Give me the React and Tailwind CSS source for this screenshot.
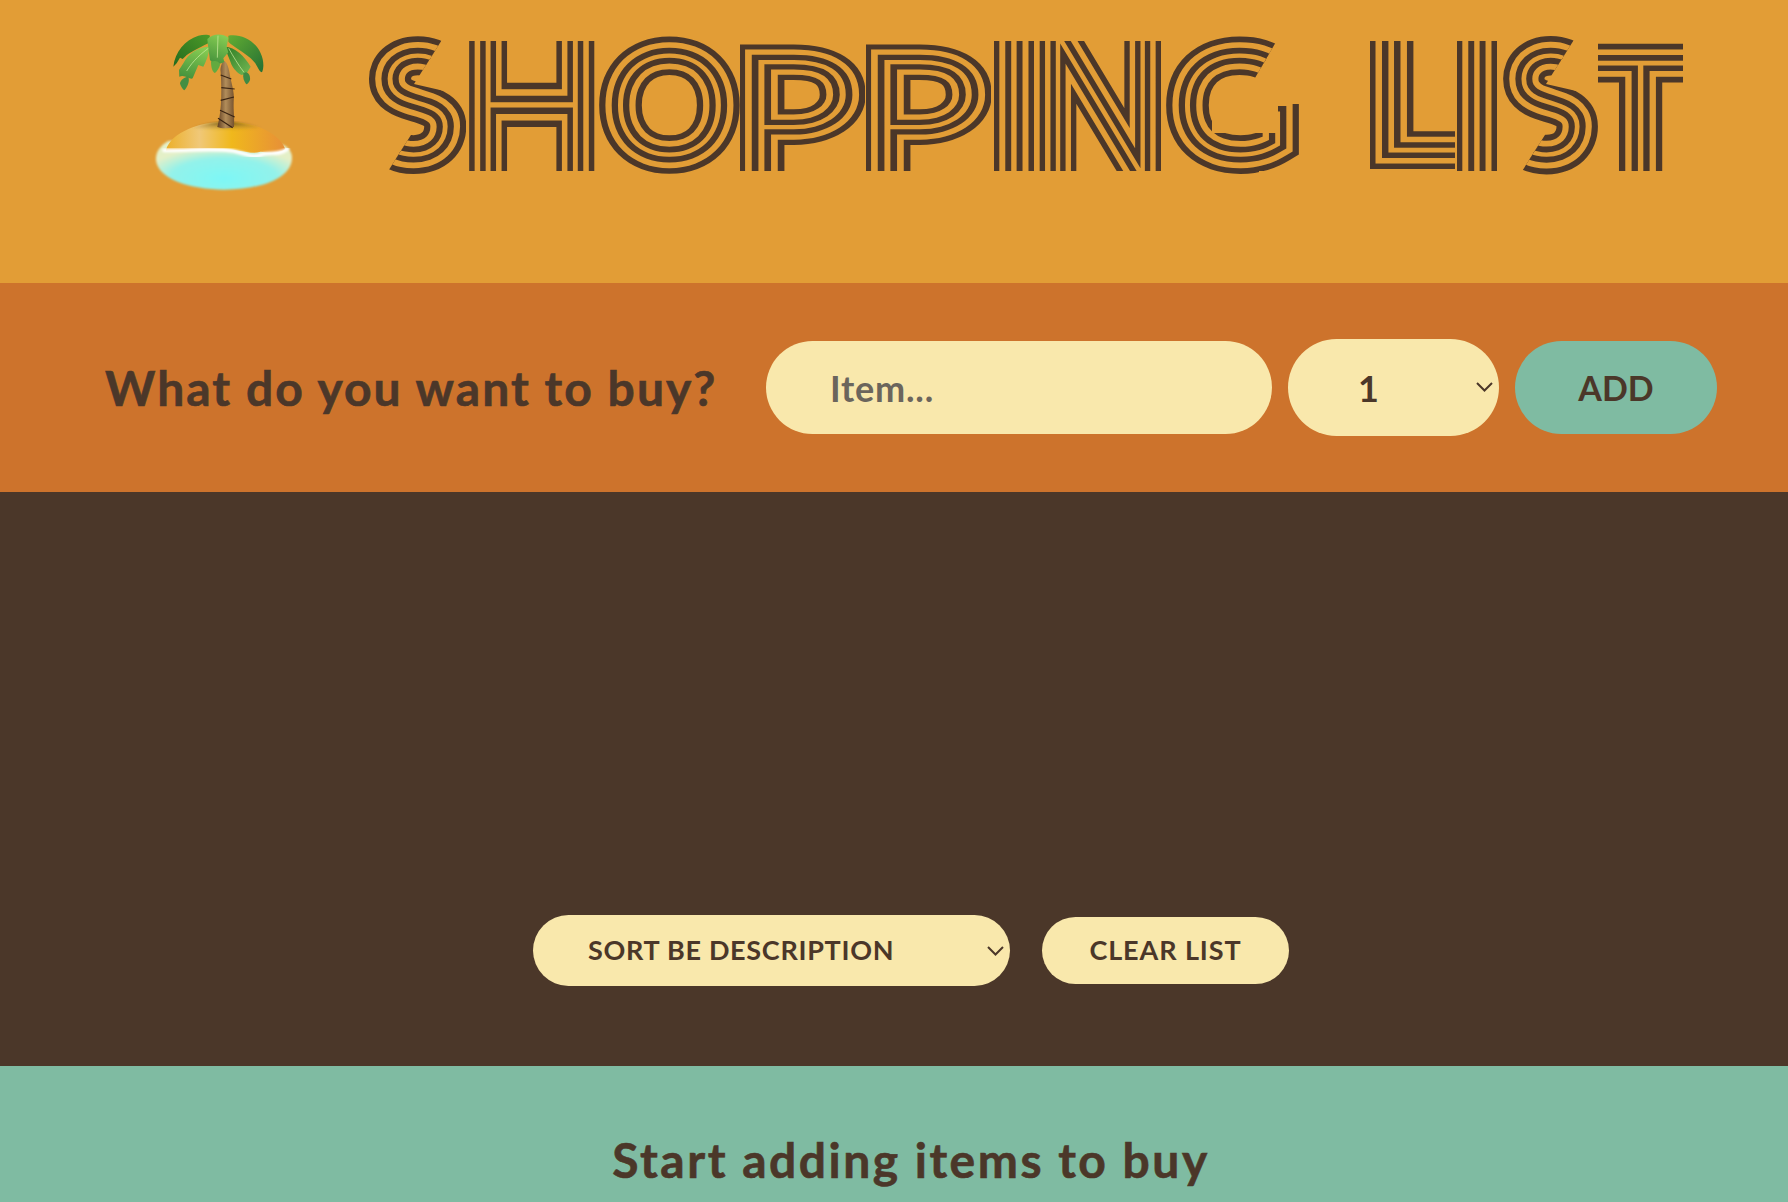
import React from "react";

const DARK = "#4b3729";
const BG = "#e29d36";

const rect = (x0, y0, x1, y1) => [[x0, y0], [x1, y0], [x1, y1], [x0, y1]];

const sClip = (x0, x1) => [
  [x0, 35],
  [x1 - 21, 35],
  [x1 - 52, 84],
  [x1, 96],
  [x1, 176],
  [x0 + 21, 176],
  [x0 + 52, 127],
  [x0, 115],
];

const gClip = [
  [1166, 35],
  [1280, 35],
  [1248, 90],
  [1212, 90],
  [1212, 133],
  [1278, 133],
  [1278, 104],
  [1299, 104],
  [1299, 171],
  [1259, 171],
  [1259, 176],
  [1166, 176],
];

const LETTERS = [
  { ch: "S", box: [384, 55, 446, 156], clip: sClip(364, 466) },
  { ch: "H", box: [487, 34, 577, 178], clip: rect(467, 41, 597, 171) },
  { ch: "O", box: [619, 55, 720, 156], clip: rect(599, 35, 740, 176) },
  { ch: "P", box: [760, 61, 845, 178], clip: rect(740, 41, 865, 171) },
  { ch: "P", box: [886, 61, 971, 178], clip: rect(866, 41, 991, 171) },
  { ch: "I", box: [1014, 34, 1014, 178], clip: rect(994, 41, 1034, 171) },
  { ch: "N", box: [1057, 34, 1144, 178], clip: rect(1037, 41, 1164, 171) },
  { ch: "G", box: [1186, 55, 1279, 156], clip: gClip },
  { ch: "L", box: [1390, 34, 1462, 151], clip: rect(1370, 41, 1455, 171) },
  { ch: "I", box: [1477, 34, 1477, 178], clip: rect(1457, 41, 1497, 171) },
  { ch: "S", box: [1518, 55, 1578, 156], clip: sClip(1498, 1598) },
  { ch: "T", box: [1590, 61, 1690, 178], clip: rect(1598, 41, 1683, 171) },
];

function fit(ch, box) {
  const ctx = document.createElement("canvas").getContext("2d");
  ctx.font = "100 200px Lato";
  const m = ctx.measureText(ch);
  const l = -m.actualBoundingBoxLeft;
  const r = m.actualBoundingBoxRight;
  const t = -m.actualBoundingBoxAscent;
  const b = m.actualBoundingBoxDescent;
  const [x0, y0, x1, y1] = box;
  const sy = (y1 - y0) / (b - t);
  const sx = x1 === x0 ? 1 : (x1 - x0) / (r - l);
  const tx = x1 === x0 ? x0 - ((l + r) / 2) * sx : x0 - l * sx;
  const ty = y0 - t * sy;
  return `translate(${tx} ${ty}) scale(${sx} ${sy})`;
}

function Title() {
  return (
    <svg width="1400" height="283" viewBox="340 0 1400 283" className="block shrink-0" aria-hidden="true">
      <defs>
        {LETTERS.map((l, i) => (
          <clipPath id={`lc${i}`} key={i}>
            <polygon points={l.clip.map((p) => p.join(",")).join(" ")} />
          </clipPath>
        ))}
      </defs>
      {LETTERS.map((l, i) => (
        <g key={i} clipPath={`url(#lc${i})`} strokeLinejoin="miter" strokeMiterlimit="10" fontFamily="Lato" fontWeight="100" fontSize="200">
          <g fill={DARK} stroke={DARK} strokeWidth="39">
            <text id={`gl${i}`} transform={fit(l.ch, l.box)} vectorEffect="non-scaling-stroke">
              {l.ch}
            </text>
          </g>
          <use href={`#gl${i}`} fill={BG} stroke={BG} strokeWidth="27" />
          <use href={`#gl${i}`} fill={DARK} stroke={DARK} strokeWidth="15" />
          <use href={`#gl${i}`} fill={BG} stroke={BG} strokeWidth="3" />
        </g>
      ))}
    </svg>
  );
}

function Palm() {
  return (
    <svg width="190" height="190" viewBox="0 0 570 570" className="block shrink-0" aria-hidden="true">
      <defs>
        <radialGradient id="water" cx="0.5" cy="0.78" r="0.6">
          <stop offset="0" stopColor="#7df7f6" />
          <stop offset="0.65" stopColor="#93f2ea" />
          <stop offset="1" stopColor="#e4f0c8" />
        </radialGradient>
        <linearGradient id="sand" x1="0" y1="0" x2="1" y2="0">
          <stop offset="0" stopColor="#ecb02a" />
          <stop offset="0.28" stopColor="#f0c878" />
          <stop offset="0.55" stopColor="#f0b81c" />
          <stop offset="1" stopColor="#e78f38" />
        </linearGradient>
        <radialGradient id="shade" cx="0.5" cy="0" r="0.5">
          <stop offset="0" stopColor="#4f3716" stopOpacity="0.95" />
          <stop offset="0.55" stopColor="#8a6a2a" stopOpacity="0.4" />
          <stop offset="1" stopColor="#8a6a2a" stopOpacity="0" />
        </radialGradient>
        <linearGradient id="trunk" x1="0" y1="0" x2="1" y2="0">
          <stop offset="0" stopColor="#5f3d20" />
          <stop offset="0.5" stopColor="#b28d5a" />
          <stop offset="1" stopColor="#75522e" />
        </linearGradient>
        <linearGradient id="leafA" x1="0.6" y1="0" x2="0.3" y2="1">
          <stop offset="0" stopColor="#86cc52" />
          <stop offset="1" stopColor="#45923c" />
        </linearGradient>
        <linearGradient id="leafB" x1="0" y1="0" x2="1" y2="1">
          <stop offset="0" stopColor="#2d7c24" />
          <stop offset="1" stopColor="#74b854" />
        </linearGradient>
        <linearGradient id="leafC" x1="0" y1="1" x2="1" y2="0">
          <stop offset="0" stopColor="#236a1e" />
          <stop offset="1" stopColor="#4c9a28" />
        </linearGradient>
        <linearGradient id="leafD" x1="0" y1="0" x2="1" y2="1">
          <stop offset="0" stopColor="#62ad32" />
          <stop offset="1" stopColor="#256f34" />
        </linearGradient>
        <filter id="soft" x="-5%" y="-5%" width="110%" height="110%">
          <feGaussianBlur stdDeviation="2.5" />
        </filter>
      </defs>
      <path d="M115 378C90 392 76 412 78 436C84 492 180 524 282 524C390 524 486 490 486 428C486 412 476 398 460 390L300 370Z" fill="url(#water)" filter="url(#soft)" />
      <path d="M108 404C125 350 210 320 290 320C370 320 445 350 466 402C450 416 420 414 392 410C360 420 340 406 290 403C220 400 160 404 108 408Z" fill="url(#sand)" />
      <path d="M130 372C165 338 225 321 290 321C355 321 415 338 448 372C390 345 190 345 130 372Z" fill="url(#shade)" filter="url(#soft)" />
      <path d="M102 406C170 408 250 398 310 408C350 416 370 430 392 420C420 408 445 424 472 402" fill="none" stroke="#ffffff" strokeWidth="11" strokeLinecap="round" filter="url(#soft)" />
      <path d="M262 336C272 300 277 250 272 170C270 160 275 142 282 138C290 140 295 155 298 170C302 200 315 230 311 260C310 290 314 310 312 336C295 341 275 341 262 336Z" fill="url(#trunk)" />
      <path d="M272 180L304 192M274 218L314 222M272 256L312 246M270 286L314 306M264 310L308 338" stroke="#3a2412" strokeWidth="3.5" fill="none" />
      <path d="M130 155C135 110 165 75 205 62C220 58 235 58 240 62L235 85C205 100 175 115 165 125L158 132L150 128L140 145Z" fill="url(#leafC)" />
      <path d="M295 62C330 55 375 75 392 115C402 135 402 160 396 172C385 168 382 150 372 140L362 130C340 110 310 95 295 80Z" fill="url(#leafD)" />
      <path d="M238 95C205 95 175 115 160 145L147 165L148 185C165 178 180 195 188 190L205 150L220 155C228 140 238 115 238 95Z" fill="url(#leafA)" />
      <path d="M175 185C162 185 150 198 150 205C152 215 160 225 163 226C172 215 180 200 175 185Z" fill="#458e42" />
      <path d="M285 95C315 95 345 125 362 155L350 175L335 180C322 175 310 160 305 150C298 130 288 110 285 95Z" fill="url(#leafB)" />
      <path d="M340 175C352 165 362 180 360 195C357 203 352 207 349 208C342 200 338 190 340 175Z" fill="#3f8a44" />
      <path d="M232 72C245 58 275 52 295 68L290 95L295 112L280 130L283 140C270 150 250 148 240 135L235 100Z" fill="url(#leafA)" />
      <path d="M243 140C255 135 270 140 270 150C265 165 258 172 254 174C246 168 243 155 243 140Z" fill="#62aa40" />
      <path d="M264 62L262 128M170 168C190 135 215 115 235 100M296 100C310 125 325 150 342 172" stroke="#cdeca0" strokeWidth="2.5" fill="none" opacity="0.85" />
    </svg>
  );
}

function Chevron({ className }) {
  return (
    <svg viewBox="0 0 17 10" className={className} fill="none" stroke="#4b3729" strokeWidth="2" aria-hidden="true">
      <path d="M1 1l7.5 7.5L16 1" />
    </svg>
  );
}

export default function App() {
  return (
    <div className="flex h-[1202px] flex-col overflow-hidden bg-[#4b3729] font-[Lato] font-bold text-[#4b3729]">
      <header className="flex h-[283px] shrink-0 items-start bg-[#e29d36] pl-[130px]">
        <div className="mt-[15px] w-[190px] shrink-0">
          <Palm />
        </div>
        <h1 className="ml-[20px]">
          <span className="sr-only">SHOPPING LIST</span>
          <Title />
        </h1>
      </header>

      <form className="flex h-[209px] shrink-0 items-center bg-[#cd732c] pl-[105px]">
        <h3 className="w-[661px] shrink-0 text-[48px] leading-none tracking-[2.05px] [-webkit-text-stroke:0.6px_#4b3729]">What do you want to buy?</h3>
        <input
          placeholder="Item..."
          className="h-[93px] w-[506px] shrink-0 rounded-full bg-[#f9e8ac] pl-[64px] text-[36px] font-bold tracking-[0.8px] outline-none placeholder:text-[#6b655c]"
        />
        <div className="relative ml-[16px] shrink-0">
          <select className="block h-[97px] w-[211px] appearance-none rounded-full bg-[#f9e8ac] pl-[70px] text-[36px] font-bold outline-none">
            <option>1</option>
          </select>
          <Chevron className="pointer-events-none absolute top-[43px] left-[188px] h-[10px] w-[17px]" />
        </div>
        <button type="button" className="ml-[16px] h-[93px] w-[202px] shrink-0 rounded-full bg-[#7fbba2] text-[34px] font-bold">
          ADD
        </button>
      </form>

      <main className="flex flex-1 items-end justify-center bg-[#4b3729] pb-[80px] pl-[34px]">
        <div className="flex items-center gap-[32px]">
          <div className="relative">
            <select className="block h-[71px] w-[477px] appearance-none rounded-full bg-[#f9e8ac] pl-[55px] text-[27px] font-bold tracking-[0.7px] outline-none">
              <option>SORT BE DESCRIPTION</option>
            </select>
            <Chevron className="pointer-events-none absolute top-[31px] left-[454px] h-[10px] w-[17px]" />
          </div>
          <button type="button" className="h-[67px] w-[247px] rounded-full bg-[#f9e8ac] text-[27px] font-bold tracking-[0.9px]">
            CLEAR LIST
          </button>
        </div>
      </main>

      <footer className="h-[136px] shrink-0 bg-[#7fbba2] pt-[70px] pl-[34px] text-center">
        <em className="text-[48px] leading-none font-bold tracking-[2.5px] not-italic [-webkit-text-stroke:0.6px_#4b3729]">Start adding items to buy</em>
      </footer>
    </div>
  );
}
